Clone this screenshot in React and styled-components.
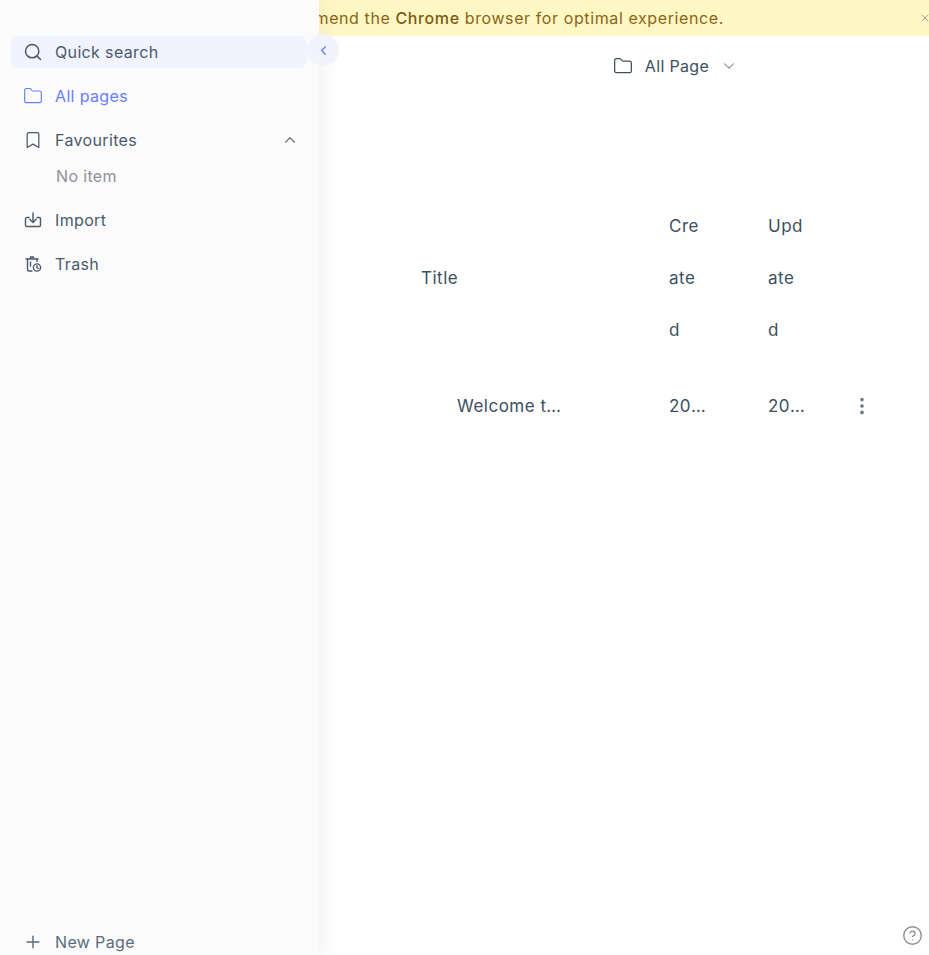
import { createGlobalStyle } from "styled-components"
import styled from "styled-components"
import { Search, Folder, Bookmark, ChevronUp, ChevronDown, ChevronLeft, Plus, CircleHelp, EllipsisVertical, X } from "lucide-react"

const GlobalStyle = createGlobalStyle`
  html, body { margin: 0; padding: 0; background: #fff; }
  body {
    font-family: Inter, "Liberation Sans", sans-serif;
    font-size: 16px;
    letter-spacing: .35px;
    color: #3d4f60;
  }
  #root { height: 955px; }
`

const Page = styled.div`
  position: relative;
  width: 929px;
  height: 955px;
  overflow: hidden;
`

const Sidebar = styled.aside`
  position: absolute;
  left: 0; top: 0; bottom: 0;
  z-index: 2;
  width: 319px;
  box-sizing: border-box;
  padding: 36px 12px 0 11px;
  display: flex;
  flex-direction: column;
  background: #fbfbfc;
  box-shadow: 6px 0 16px rgba(80, 90, 120, 0.07);
`

const Nav = styled.nav`
  flex: 1;
  display: flex;
  flex-direction: column;
  gap: 12px;
`

const NavRow = styled.div`
  height: 32px;
  padding: 0 8px 0 12px;
  display: flex;
  align-items: center;
  gap: 12px;
  border-radius: 8px;
  color: ${p => p.$active ? "#6880ff" : "#4a5a6c"};
  background: ${p => p.$search ? "#f1f3ff" : "transparent"};
  svg { flex: none; }
`

const FavChevron = styled(ChevronUp)`
  margin-left: auto;
  color: #66727f;
`

const EmptyNote = styled.div`
  height: 24px;
  margin-top: -4px;
  margin-bottom: 4px;
  padding-left: 45px;
  line-height: 24px;
  color: #8f8f9b;
`

const NewPage = styled(NavRow)`
  height: 26px;
  color: #5a6b7d;
`

const Toggle = styled.div`
  position: absolute;
  left: 307px; top: 34px;
  width: 32px; height: 32px;
  border-radius: 50%;
  display: flex;
  align-items: center;
  justify-content: center;
  background: #f1f3ff;
  color: #6880ff;
`

const Main = styled.main`
  height: 100%;
  display: flex;
  flex-direction: column;
`

const Banner = styled.div`
  height: 36px;
  flex: none;
  box-sizing: border-box;
  padding-left: 28px;
  display: flex;
  align-items: center;
  justify-content: center;
  position: relative;
  background: #fff8c5;
  color: #8a6414;
  letter-spacing: .6px;
  b { font-weight: 500; color: #7c5a10; }
`

const Close = styled(X)`
  position: absolute;
  right: -2px; top: 12px;
  color: #8a8f8c;
`

const Header = styled.header`
  height: 60px;
  padding-left: 422px;
  display: flex;
  align-items: center;
  justify-content: center;
  gap: 12px;
  color: #3d4f60;
`

const HeaderChevron = styled(ChevronDown)`
  margin-left: -1px;
  color: #6b7885;
`

const Table = styled.table`
  margin: 104px 0 0 405px;
  width: 500px;
  table-layout: fixed;
  border-collapse: collapse;
  font-size: 17px;
  letter-spacing: .5px;
`

const Th = styled.th`
  box-sizing: border-box;
  width: ${p => p.$w}px;
  padding: 0 ${p => p.$pr ?? 16}px 0 16px;
  font-weight: 400;
  text-align: left;
  line-height: 52px;
  word-break: break-all;
`

const Row = styled.tr`
  height: 100px;
`

const Td = styled.td`
  padding: 0 ${p => p.$pr ?? 16}px 0 ${p => p.$pl ?? 16}px;
  white-space: nowrap;
  overflow: hidden;
  text-overflow: ellipsis;
`

const MoreButton = styled.div`
  display: flex;
  color: #6d7780;
`

const Help = styled(CircleHelp)`
  position: absolute;
  right: 6px; bottom: 9px;
  color: #888d90;
`

const ImportIcon = () => (
  <svg width="20" height="20" viewBox="0 0 20 20" fill="none" stroke="currentColor" strokeWidth="1.4" strokeLinecap="round" strokeLinejoin="round">
    <path d="M6 7.5H3.8A1.3 1.3 0 0 0 2.5 8.8v6.4a1.3 1.3 0 0 0 1.3 1.3h12.4a1.3 1.3 0 0 0 1.3-1.3V8.8a1.3 1.3 0 0 0-1.3-1.3H14" />
    <path d="M10 3v9M6.8 9.2 10 12.4l3.2-3.2" />
  </svg>
)

const TrashIcon = () => (
  <svg width="20" height="20" viewBox="0 0 20 20" fill="none" stroke="currentColor" strokeWidth="1.4" strokeLinecap="round" strokeLinejoin="round">
    <path d="M3 5h12M7.5 5V3h3v2M4.5 5v10.5A1.5 1.5 0 0 0 6 17h3" />
    <path d="M7.5 8v4M14 5v2.5" />
    <circle cx="14" cy="13.5" r="3.6" />
    <path d="M14 11.8v1.8l1.2.7" />
  </svg>
)

const App = () => (
  <Page>
    <GlobalStyle />
    <Sidebar>
      <Nav>
        <NavRow $search><Search size={20} strokeWidth={1.8} /><span>Quick search</span></NavRow>
        <NavRow $active><Folder size={20} strokeWidth={1.4} /><span>All pages</span></NavRow>
        <NavRow><Bookmark size={20} strokeWidth={1.5} /><span>Favourites</span><FavChevron size={18} strokeWidth={1.5} /></NavRow>
        <EmptyNote>No item</EmptyNote>
        <NavRow><ImportIcon /><span>Import</span></NavRow>
        <NavRow><TrashIcon /><span>Trash</span></NavRow>
      </Nav>
      <NewPage><Plus size={20} strokeWidth={1.7} /><span>New Page</span></NewPage>
      <Toggle><ChevronLeft size={15} strokeWidth={2} /></Toggle>
    </Sidebar>
    <Main>
      <Banner>
        <span>We recommend the <b>Chrome</b> browser for optimal experience.</span>
        <Close size={12} strokeWidth={1.6} />
      </Banner>
      <Header>
        <Folder size={20} strokeWidth={1.5} />
        <span>All Page</span>
        <HeaderChevron size={18} strokeWidth={1.4} />
      </Header>
      <Table>
        <thead>
          <tr>
            <Th $w={248}>Title</Th>
            <Th $w={99} $pr={46}>Created</Th>
            <Th $w={99} $pr={46}>Updated</Th>
            <Th $w={54} $pr={0}></Th>
          </tr>
        </thead>
        <tbody>
          <Row>
            <Td $pl={52} $pr={88}>Welcome to AFFiNE</Td>
            <Td $pr={46}>2022-08-12</Td>
            <Td $pr={46}>2022-08-12</Td>
            <Td $pl={0} $pr={0}><MoreButton><EllipsisVertical size={22} strokeWidth={2} /></MoreButton></Td>
          </Row>
        </tbody>
      </Table>
    </Main>
    <Help size={21} strokeWidth={1.5} />
  </Page>
)

export default App
